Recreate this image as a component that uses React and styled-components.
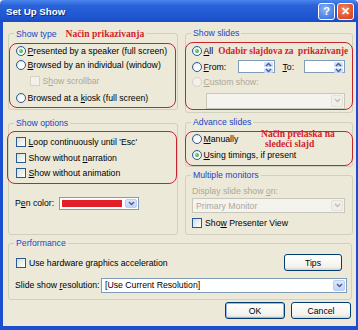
import React from 'react';
import styled, { createGlobalStyle } from 'styled-components';

const Global = createGlobalStyle`
  html, body { margin: 0; padding: 0; background: #fff; }
  body {
    font-family: "Liberation Sans", Arial, sans-serif;
    font-size: 8.7px;
    color: #000;
  }
`;

const Window = styled.div`
  width: 358px;
  height: 330px;
  display: flex;
  flex-direction: column;
  overflow: hidden;
`;

const TitleBar = styled.div`
  height: 22px;
  flex: none;
  display: flex;
  align-items: center;
  justify-content: space-between;
  padding: 0 4px 0 6px;
  background: linear-gradient(#4a86ec, #2a62d8 25%, #1f56d2 75%, #1a4cc2);
  border-radius: 4px 4px 0 0;
`;

const Title = styled.span`
  color: #fff;
  font-weight: bold;
  font-size: 9.7px;
  text-shadow: 1px 1px 0 #0c2f8c;
`;

const Caps = styled.div`
  display: flex;
  gap: 2px;
`;

const CapButton = styled.div`
  width: 17px;
  height: 17px;
  box-sizing: border-box;
  border: 1px solid #fff;
  border-radius: 3px;
  display: flex;
  align-items: center;
  justify-content: center;
  color: #fff;
  font-weight: bold;
  font-size: 11px;
  background: ${p => (p.$close
    ? 'radial-gradient(circle at 40% 35%, #f08a64, #e2552e 60%, #c8401e)'
    : 'radial-gradient(circle at 40% 35%, #8fb5f5, #4f86e8 60%, #3a6fd8)')};
`;

const Body = styled.div`
  flex: 1;
  display: flex;
  flex-direction: column;
  background: #ece9d8;
  border: solid #1b4fcf;
  border-width: 0 2px 4px 3px;
  padding: 5.5px 3px 0 5px;
`;

const Columns = styled.div`
  display: grid;
  grid-template-columns: 170px 168px;
  column-gap: 7px;
`;

const Column = styled.div`
  display: flex;
  flex-direction: column;
  gap: ${p => p.$gap}px;
`;

const Group = styled.fieldset`
  margin: 0;
  padding: 0 0 ${p => p.$pb ?? 1}px;
  border: 1px solid #d0d0bf;
  border-radius: 3px;
  min-width: 0;
  position: relative;
  flex: ${p => (p.$grow ? 1 : 'none')};
`;

const Legend = styled.legend`
  margin-left: 5px;
  padding: 0 2px;
  line-height: 11px;
  color: #1846c8;
`;

const Note = styled.span`
  font-family: "Liberation Serif", "Times New Roman", serif;
  font-weight: bold;
  font-size: ${p => p.$size ?? 9.6}px;
  color: #d21f2a;
  margin-left: ${p => p.$ml ?? 0}px;
`;

const NoteBlock = styled.div`
  position: absolute;
  left: 75px;
  top: 1px;
  line-height: 10px;
  font-family: "Liberation Serif", "Times New Roman", serif;
  font-weight: bold;
  font-size: 9.6px;
  color: #d21f2a;
  & span { display: block; }
  & span + span { padding-left: 4px; }
`;

const Mark = styled.div`
  border: 1.5px solid #c8242f;
  border-radius: 8px;
  margin: ${p => p.$m};
  padding: ${p => p.$p};
`;

const Row = styled.div`
  display: flex;
  align-items: center;
  gap: 2px;
  height: ${p => p.$h ?? 14}px;
  margin-top: ${p => p.$mt ?? 0}px;
  padding-left: ${p => p.$pl ?? 0}px;
  padding-right: ${p => p.$pr ?? 0}px;
  justify-content: ${p => p.$justify ?? 'flex-start'};
  color: ${p => (p.$disabled ? '#aca899' : '#000')};
  white-space: nowrap;
`;

const Radio = styled.span`
  width: 10px;
  height: 10px;
  box-sizing: border-box;
  border-radius: 50%;
  flex: none;
  display: flex;
  align-items: center;
  justify-content: center;
  border: 1px solid ${p => (p.$disabled ? '#d6d3c6' : '#2a5a92')};
  background: ${p => (p.$disabled
    ? '#f2f1ea'
    : 'radial-gradient(circle at 65% 65%, #fff 35%, #d8d6cf)')};
  &::after {
    content: '';
    display: ${p => (p.$on ? 'block' : 'none')};
    width: 4px;
    height: 4px;
    border-radius: 50%;
    background: radial-gradient(circle at 35% 35%, #7ee07e, #21a121);
  }
`;

const Check = styled.span`
  width: 10px;
  height: 10px;
  box-sizing: border-box;
  flex: none;
  margin-right: 1px;
  border: 1px solid ${p => (p.$disabled ? '#d6d3c6' : '#2a5a92')};
  background: ${p => (p.$disabled
    ? '#f2f1ea'
    : 'linear-gradient(135deg, #dcdcd7, #fff)')};
`;

const Label = styled.span`
  width: ${p => (p.$w ? `${p.$w}px` : 'auto')};
  margin-left: ${p => p.$ml ?? 0}px;
  flex: none;
`;

const Field = styled.div`
  width: ${p => p.$w}px;
  height: ${p => p.$h ?? 13}px;
  box-sizing: border-box;
  flex: none;
  margin-left: ${p => p.$ml ?? 0}px;
  margin-top: ${p => p.$mt ?? 0}px;
  border: 1px solid ${p => (p.$disabled ? '#c9c7ba' : '#7f9db9')};
  background: ${p => (p.$disabled ? '#f4f3ee' : '#fff')};
  color: ${p => (p.$disabled ? '#aca899' : '#000')};
  display: flex;
  align-items: stretch;
  padding: 1px;
`;

const FieldText = styled.span`
  flex: 1;
  display: flex;
  align-items: center;
  padding-left: 2px;
  overflow: hidden;
  white-space: nowrap;
`;

const Swatch = styled.span`
  flex: 1;
  margin: 1px 3px 1px 1px;
  background: #e3202a;
`;

const Arrow = styled.span`
  width: ${p => p.$w ?? 12}px;
  flex: none;
  border-radius: 2px;
  display: flex;
  align-items: center;
  justify-content: center;
  border: 1px solid ${p => (p.$disabled ? '#e3e2da' : '#b9cdf6')};
  box-sizing: border-box;
  background: ${p => (p.$disabled
    ? '#f0efe8'
    : 'linear-gradient(#dce7fd, #c0d3fa)')};
`;

const Spin = styled.span`
  width: 9px;
  flex: none;
  display: flex;
  flex-direction: column;
  gap: 1px;
`;

const SpinHalf = styled.span`
  flex: 1;
  border-radius: 1px;
  display: flex;
  align-items: center;
  justify-content: center;
  background: linear-gradient(#dce7fd, #c0d3fa);
`;

const Button = styled.div`
  width: ${p => p.$w ?? 58}px;
  height: 17px;
  box-sizing: border-box;
  flex: none;
  border: 1px solid #003c74;
  border-radius: 3px;
  display: flex;
  align-items: center;
  justify-content: center;
  background: linear-gradient(#fff, #f3f2ec 80%, #d9d4c8);
  box-shadow: ${p => (p.$default ? 'inset 0 0 0 1px #97b8ee' : 'none')};
`;

const ButtonBar = styled.div`
  display: flex;
  justify-content: flex-end;
  gap: 6px;
  margin-top: 2px;
  padding-right: 2px;
`;

const Chevron = ({ up, color = '#4d6185' }) => (
  <svg width="7" height="5" viewBox="0 0 7 5">
    <polyline
      points={up ? '1,4 3.5,1.5 6,4' : '1,1 3.5,3.5 6,1'}
      fill="none"
      stroke={color}
      strokeWidth="1.5"
    />
  </svg>
);

const SpinBox = ({ w, ml }) => (
  <Field $w={w} $ml={ml}>
    <FieldText />
    <Spin>
      <SpinHalf><Chevron up /></SpinHalf>
      <SpinHalf><Chevron /></SpinHalf>
    </Spin>
  </Field>
);

export default function App() {
  return (
    <Window>
      <Global />
      <TitleBar>
        <Title>Set Up Show</Title>
        <Caps>
          <CapButton>?</CapButton>
          <CapButton $close>✕</CapButton>
        </Caps>
      </TitleBar>
      <Body>
        <Columns>
          <Column $gap={7.5}>
            <Group>
              <Legend>
                Show type<Note $ml={9}>Način prikazivanja</Note>
              </Legend>
              <Mark $m="3.5px 1px 0 0" $p="0 0 2px 5.5px">
                <Row>
                  <Radio $on />
                  <span><u>P</u>resented by a speaker (full screen)</span>
                </Row>
                <Row>
                  <Radio />
                  <span><u>B</u>rowsed by an individual (window)</span>
                </Row>
                <Row $mt={2} $pl={14} $disabled>
                  <Check $disabled />
                  <span>S<u>h</u>ow scrollbar</span>
                </Row>
                <Row $mt={3}>
                  <Radio />
                  <span>Browsed at a <u>k</u>iosk (full screen)</span>
                </Row>
              </Mark>
            </Group>
            <Group $grow>
              <Legend>Show options</Legend>
              <Mark $m="2.5px 0 0 -2px" $p="2.5px 0 3.5px 7.5px">
                <Row>
                  <Check />
                  <span><u>L</u>oop continuously until 'Esc'</span>
                </Row>
                <Row $mt={2}>
                  <Check />
                  <span>Show without <u>n</u>arration</span>
                </Row>
                <Row $mt={1}>
                  <Check />
                  <span><u>S</u>how without animation</span>
                </Row>
              </Mark>
              <Row $mt={12} $pl={6}>
                <Label $w={42}>P<u>e</u>n color:</Label>
                <Field $w={80} $h={13}>
                  <Swatch />
                  <Arrow><Chevron /></Arrow>
                </Field>
              </Row>
            </Group>
          </Column>
          <Column $gap={4.5}>
            <Group $pb={1.5}>
              <Legend>Show slides</Legend>
              <Mark $m="3.5px -1px 0 -1px" $p="0.5px 0 0.5px 5.5px">
                <Row>
                  <Radio $on />
                  <span><u>A</u>ll</span>
                  <Note $ml={3} $size={9.3}>Odabir slajdova za&nbsp; prikazivanje</Note>
                </Row>
                <Row $mt={2}>
                  <Radio />
                  <Label $w={32}><u>F</u>rom:</Label>
                  <SpinBox w={37} />
                  <Label $w={19} $ml={6}><u>T</u>o:</Label>
                  <SpinBox w={41} />
                </Row>
                <Row $mt={1} $disabled>
                  <Radio $disabled />
                  <span><u>C</u>ustom show:</span>
                </Row>
                <Field $w={139} $h={16} $mt={4} $ml={14.5} $disabled>
                  <FieldText />
                  <Arrow $disabled><Chevron color="#c0bfb5" /></Arrow>
                </Field>
              </Mark>
            </Group>
            <Group $pb={0}>
              <Legend>Advance slides</Legend>
              <NoteBlock>
                <span>Način prelaska na</span>
                <span>sledeći slajd</span>
              </NoteBlock>
              <Mark $m="2.5px -1px 0 -1px" $p="0 0 3.5px 5.5px">
                <Row>
                  <Radio />
                  <span><u>M</u>anually</span>
                </Row>
                <Row $mt={2}>
                  <Radio $on />
                  <span><u>U</u>sing timings, if present</span>
                </Row>
              </Mark>
            </Group>
            <Group $pb={4} style={{ marginTop: -2 }}>
              <Legend>Multiple monitors</Legend>
              <Row $h={12} $mt={4.5} $pl={6} $disabled>
                <span>Display slide show <u>o</u>n:</span>
              </Row>
              <Field $w={153} $h={15} $mt={1} $ml={6} $disabled>
                <FieldText>Primary Monitor</FieldText>
                <Arrow $disabled><Chevron color="#c0bfb5" /></Arrow>
              </Field>
              <Row $mt={3} $pl={6}>
                <Check />
                <span>Sho<u>w</u> Presenter View</span>
              </Row>
            </Group>
          </Column>
        </Columns>
        <Group $pb={6.5} style={{ marginTop: 2.5, marginRight: 1 }}>
          <Legend>Performance</Legend>
          <Row $h={17} $mt={5.5} $pl={7} $pr={9} $justify="space-between">
            <Row>
              <Check />
              <span>Use hardware graphics acceleration</span>
            </Row>
            <Button>Tips</Button>
          </Row>
          <Row $h={15} $mt={6.5} $pl={6}>
            <Label $w={84}>Slide show <u>r</u>esolution:</Label>
            <Field $w={246} $h={15}>
              <FieldText>[Use Current Resolution]</FieldText>
              <Arrow><Chevron /></Arrow>
            </Field>
          </Row>
        </Group>
        <ButtonBar>
          <Button $w={60} $default>OK</Button>
          <Button $w={60}>Cancel</Button>
        </ButtonBar>
      </Body>
    </Window>
  );
}
